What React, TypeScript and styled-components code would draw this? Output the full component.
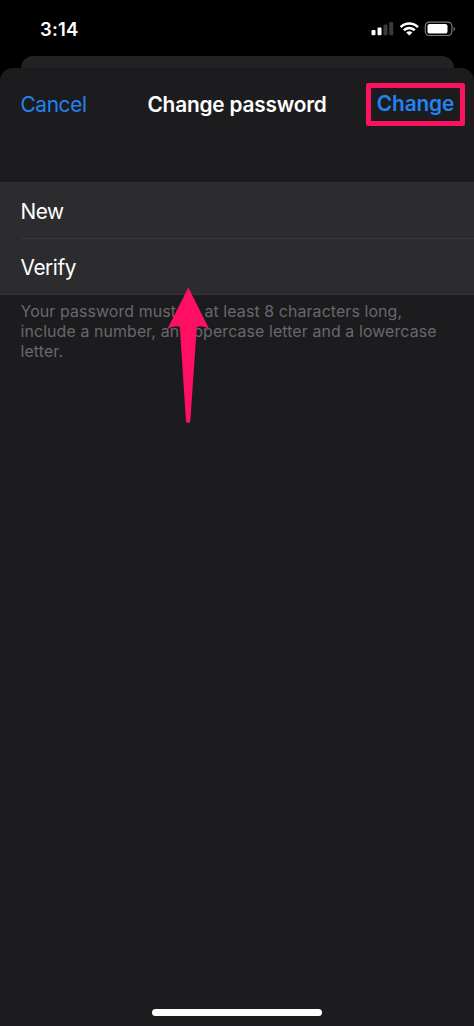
import React from 'react';
import styled, { createGlobalStyle } from 'styled-components';

const GlobalStyle = createGlobalStyle`
  * { box-sizing: border-box; }
  html, body { margin: 0; padding: 0; background: #000; }
  body { font-family: Inter, "Liberation Sans", sans-serif; -webkit-font-smoothing: antialiased; }
`;

const Screen = styled.main`
  position: relative;
  display: flex;
  flex-direction: column;
  width: 474px;
  height: 1026px;
  background: #000;
  overflow: hidden;
`;

const StatusBar = styled.header`
  display: flex;
  justify-content: space-between;
  align-items: center;
  flex: none;
  height: 56px;
  padding: 1px 17px 0 40px;
`;

const Time = styled.time`
  font-size: 18.5px;
  line-height: 24px;
  font-weight: 600;
  letter-spacing: 0.2px;
  color: #fff;
`;

const StatusIcons = styled.svg`
  display: block;
  width: 86px;
  height: 20px;
`;

const BackSheet = styled.div`
  flex: none;
  height: 12px;
  margin: 0 20.5px;
  border-radius: 12px 12px 0 0;
  background: #222224;
`;

const Sheet = styled.section`
  display: flex;
  flex-direction: column;
  flex: 1;
  border-radius: 13px 13px 0 0;
  background: #1c1c1e;
`;

const NavBar = styled.nav`
  display: grid;
  grid-template-columns: 1fr auto 1fr;
  align-items: center;
  flex: none;
  height: 73px;
  margin-bottom: 41px;
  padding: 0 9px;
`;

const NavButton = styled.button<{ $strong?: boolean }>`
  justify-self: start;
  padding: 0;
  margin-left: ${p => (p.$strong ? 0 : '11.5px')};
  border: 0;
  background: none;
  font: ${p => (p.$strong ? 600 : 400)} 20.8px/26px Inter, "Liberation Sans", sans-serif;
  letter-spacing: ${p => (p.$strong ? '-0.1px' : '-0.35px')};
  color: #2383f0;
`;

const Title = styled.h1`
  margin: 0;
  font-size: 20.8px;
  line-height: 26px;
  font-weight: 600;
  letter-spacing: -0.18px;
  color: #fff;
`;

const Highlight = styled.div`
  display: flex;
  justify-content: center;
  align-items: center;
  justify-self: end;
  width: 99px;
  height: 43px;
  padding-bottom: 1px;
  border: 5px solid #fb1361;
  border-radius: 2px;
`;

const FieldGroup = styled.div`
  flex: none;
  border-top: 1px solid #323234;
  border-bottom: 1px solid #353537;
  background: #2c2c2e;
`;

const FieldRow = styled.label<{ $divided?: boolean }>`
  display: flex;
  align-items: center;
  height: ${p => (p.$divided ? 56 : 55)}px;
  margin-left: 20.5px;
  padding-top: 2px;
  border-bottom: ${p => (p.$divided ? '1px solid #38383b' : '0')};
  font-size: 20.8px;
  letter-spacing: -0.4px;
  color: #fff;
`;

const Hint = styled.p`
  margin: 6.6px 20px 0 20.5px;
  font-size: 15.9px;
  line-height: 20.2px;
  letter-spacing: 0.11px;
  color: #68686c;
`;

const HomeIndicator = styled.div`
  flex: none;
  align-self: center;
  width: 170px;
  height: 7px;
  margin: auto 0 10px;
  border-radius: 4px;
  background: #fff;
`;

const Pointer = styled.svg`
  position: absolute;
  left: 166px;
  top: 286px;
  width: 44px;
  height: 138px;
`;

function StatusGlyphs() {
  return (
    <StatusIcons viewBox="0 0 86 20" aria-hidden="true">
      <g fill="#fff">
        <rect x="0.5" y="11" width="4" height="5.2" rx="1" />
        <rect x="6.5" y="8.5" width="4" height="7.7" rx="1" />
        <g fill="#3a3a3c">
          <rect x="12.5" y="5.5" width="4" height="10.7" rx="1" />
          <rect x="18.2" y="3" width="4" height="13.2" rx="1" />
        </g>
        <path d="M28.8 7.2C34 1.8 42.6 1.8 47.8 7.2L46 9C41.8 4.8 34.8 4.8 30.6 9Z" />
        <path d="M32 10.4C35.4 7 41.2 7 44.6 10.4L42.7 12.3C40.3 10 36.3 10 33.9 12.3Z" />
        <path d="M35.2 13.5C36.9 11.9 39.7 11.9 41.4 13.5L38.3 16.6Z" />
        <rect x="56.5" y="5" width="20" height="9.6" rx="2.2" />
        <path d="M82.6 7.7C84.4 8.2 84.4 11.8 82.6 12.3Z" fill="#777" />
      </g>
      <rect x="54.3" y="3.1" width="26.6" height="13.4" rx="4" fill="none" stroke="#7b7b7b" strokeWidth="1.2" />
    </StatusIcons>
  );
}

export default function App() {
  return (
    <>
      <GlobalStyle />
      <Screen>
        <StatusBar>
          <Time>3:14</Time>
          <StatusGlyphs />
        </StatusBar>
        <BackSheet />
        <Sheet>
          <NavBar>
            <NavButton>Cancel</NavButton>
            <Title>Change password</Title>
            <Highlight>
              <NavButton $strong>Change</NavButton>
            </Highlight>
          </NavBar>
          <FieldGroup>
            <FieldRow $divided>New</FieldRow>
            <FieldRow>Verify</FieldRow>
          </FieldGroup>
          <Hint>
            Your password must be at least 8 characters long,<br />
            include a number, an uppercase letter and a lowercase<br />
            letter.
          </Hint>
          <HomeIndicator />
        </Sheet>
        <Pointer viewBox="0 0 44 138" aria-hidden="true">
          <path
            d="M22.3 1.5L43.3 43.3Q37 39 30.8 41L24.3 135Q24 137 22.2 137Q20.3 137 20 135L13.8 41Q7.5 39 1.3 43.3Z"
            fill="#ff0f62"
          />
        </Pointer>
      </Screen>
    </>
  );
}
